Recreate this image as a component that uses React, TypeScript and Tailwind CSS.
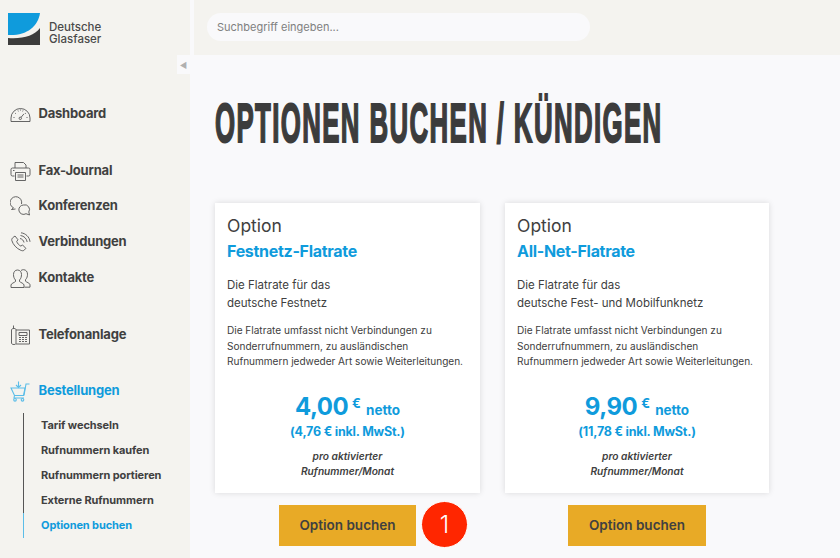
import React from "react";

const ic = "w-[21px] h-[21px] shrink-0 fill-none stroke-[#555555] stroke-[0.9]";

const Gauge = () => (
  <svg viewBox="0 0 21 21" className={ic}>
    <path d="M1 17.500v-3.500a9.500 9.500 0 0 1 19 0v3.500z" />
    <path d="M3.500 13.500h1M16.500 13.500h1M5 9l.8.7M16 9l-.8.7M8 6.500l.4.9M13 6.500l-.4.9M10.500 5.500v1" />
    <circle cx="10.300" cy="14.300" r="1.200" />
    <path d="M11 13.400l3-3.600" />
  </svg>
);
const Printer = () => (
  <svg viewBox="0 0 21 21" className={ic}>
    <path d="M5 7V1.500h8.500L16 4v3" />
    <path d="M4.500 15H2.500A1.500 1.500 0 0 1 1 13.500V8.500A1.500 1.500 0 0 1 2.500 7h16A1.500 1.500 0 0 1 20 8.500v5a1.500 1.500 0 0 1-1.500 1.500h-2" />
    <path d="M5.500 11.500h10v8h-10z" />
    <path d="M7.500 14h6M7.500 16h6M3 9.500h1.500" />
  </svg>
);
const Chat = () => (
  <svg viewBox="0 0 21 21" className={ic}>
    <path d="M11.500 8A5.800 5.800 0 1 0 3.500 11.800L1.500 13.500l4-.5" />
    <path d="M13.500 9a4.700 4.700 0 1 0 2.500 8.700l3.500 1.300-.7-3A4.700 4.700 0 0 0 13.500 9z" />
  </svg>
);
const Phone = () => (
  <svg viewBox="0 0 21 21" className={ic}>
    <path d="M3 5.500l2-1.500 3 3.800-1.300 1.600c.6 2 2.200 3.800 4.200 4.700l1.600-1.200 3.300 3.400-1.700 2c-.8.600-2 .6-3.300 0C6.500 16.500 3 12.500 1.800 8.500c-.3-1.200.3-2.300 1.200-3z" />
    <path d="M10 6.500c2 .3 3.700 2 4 4M10.500 3.500c3.500.4 6.200 3.200 6.700 6.500M11 .8c4.500.5 8.500 4 9 9" />
  </svg>
);
const People = () => (
  <svg viewBox="0 0 21 21" className={ic}>
    <path d="M1 19.500v-2.500c0-1.500 3.500-2.500 4.500-3.500v-1.500C4 10.500 3.500 8.500 3.500 6.500c0-2.500 1.500-4.500 4-4.500s4 2 4 4.500c0 2-.5 4-2 5.500v1.500c1 1 4.500 2 4.500 3.500v2.500z" />
    <path d="M11 2.500c.8-.6 1.500-.8 2.500-.8 2.500 0 4 2 4 4.500 0 2-.5 4-2 5.500v1.500c1 1 4.500 2 4.500 3.500v2.500h-5.500" />
  </svg>
);
const Desk = () => (
  <svg viewBox="0 0 21 21" className={ic}>
    <path d="M4 3.500c-1.500 0-2.500.5-2.500 1.500v13c0 1 1 1.500 2.500 1.500s2-.5 2-1.500V5c0-1-.5-1.500-2-1.500z" />
    <path d="M3.500 3.500V.5M6 5h13.500v14H6" />
    <path d="M9 7.500h8v3H9z" />
    <path d="M9 12.500h2M12 12.500h2M15 12.500h2M9 14.500h2M12 14.500h2M15 14.500h2M9 16.500h2M12 16.500h2M15 16.500h2" />
  </svg>
);
const Cart = () => (
  <svg viewBox="0 0 21 21" className="w-[21px] h-[21px] shrink-0 fill-none stroke-[#5bbde8] stroke-[1.1]">
    <path d="M1 7h14l-1.500 7.500H4.500z" />
    <path d="M14 14.500l2-11.500h3.500" />
    <path d="M4.500 14.500l-.5 2.500h10" />
    <circle cx="5" cy="18.800" r="1.300" />
    <circle cx="12.500" cy="18.800" r="1.300" />
    <path d="M8.500 .5v6M6 4l2.500 2.500L11 4" />
  </svg>
);

function NavItem({ icon, label, className = "", active = false }: { icon: React.ReactNode; label: string; className?: string; active?: boolean }) {
  return (
    <div className={`flex h-[24px] items-center gap-[7.500px] pl-[10px] ${className}`}>
      {icon}
      <span className={`text-[13px] font-bold tracking-[-0.2px] ${active ? "text-[#0f9bdc]" : "text-[#404040]"}`}>{label}</span>
    </div>
  );
}

function Card({ name, sub, price, gross, width, buttonWidth }: { name: string; sub: string; price: string; gross: string; width: string; buttonWidth: string }) {
  return (
    <div className="flex flex-col items-center">
      <div className={`h-[290px] ${width} bg-white px-[12px] pt-[12px] shadow-[0_0_6px_rgba(0,0,0,0.13)]`}>
        <div className="text-[17.5px] leading-[22px] text-[#404040]">Option</div>
        <div className="mt-[3px] text-[16px] font-bold leading-[22px] tracking-[-0.3px] text-[#0f9bdc]">{name}</div>
        <div className="mt-[14px] text-[11.5px] leading-[18px] text-[#404040]">
          Die Flatrate für das
          <br />
          {sub}
        </div>
        <div className="mt-[11px] whitespace-nowrap text-[10.05px] leading-[15.500px] text-[#404040]">
          Die Flatrate umfasst nicht Verbindungen zu
          <br />
          Sonderrufnummern, zu ausländischen
          <br />
          Rufnummern jedweder Art sowie Weiterleitungen.
        </div>
        <div className="mt-[23px] text-center font-bold text-[#0f9bdc]">
          <div className="leading-[28px]">
            <span className="text-[24px] tracking-[-0.5px]">{price}</span>
            <span className="relative top-[-7px] ml-[4px] text-[13px]">€</span>
            <span className="ml-[5px] text-[13.5px]">netto</span>
          </div>
          <div className="mt-[-1px] text-[12.5px] leading-[18px] tracking-[-0.2px]">{gross}</div>
        </div>
        <div className="mt-[8px] text-center text-[10.2px] font-semibold italic leading-[15.500px] text-[#404040]">
          pro aktivierter
          <br />
          Rufnummer/Monat
        </div>
      </div>
      <div className={`mt-[12px] flex h-[41px] ${buttonWidth} items-center justify-center bg-[#e8aa26] text-[13.500px] font-semibold text-[#404040]`}>
        Option buchen
      </div>
    </div>
  );
}

export default function App() {
  return (
    <div className="flex h-[558px] w-[840px] overflow-hidden bg-[#f9f9fb] font-['Inter',sans-serif]">
      <aside className="relative h-full w-[190px] shrink-0 bg-[#f4f3ef]">
        <div className="flex items-end gap-[9px] pl-[8px] pt-[13px]">
          <svg viewBox="0 0 32 32" className="h-[32px] w-[32px] shrink-0">
            <path d="M0 0h32C30 14 18 23 0 22z" fill="#0f9bdc" />
            <path d="M32 15v17H0v-7c15 1 26-2 32-10z" fill="#3c3c3c" />
          </svg>
          <div className="text-[11.500px] font-medium leading-[12px] text-[#4a4a4a]">
            Deutsche
            <br />
            Glasfaser
          </div>
        </div>
        <div className="absolute right-0 top-[55px] flex h-[19px] w-[13px] items-center justify-center bg-[#f9f9fb] text-[8px] text-[#b0b0b0]">◀</div>
        <nav className="mt-[57px]">
          <NavItem icon={<Gauge />} label="Dashboard" className="mb-[33px]" />
          <NavItem icon={<Printer />} label="Fax-Journal" className="mb-[11px]" />
          <NavItem icon={<Chat />} label="Konferenzen" className="mb-[12px]" />
          <NavItem icon={<Phone />} label="Verbindungen" className="mb-[12px]" />
          <NavItem icon={<People />} label="Kontakte" className="mb-[33px]" />
          <NavItem icon={<Desk />} label="Telefonanlage" className="mb-[32px]" />
          <NavItem icon={<Cart />} label="Bestellungen" active />
          <div className="relative ml-[23px] mt-[10px] border-l border-[#555555] pl-[17px] text-[11px] font-bold tracking-[-0.1px] text-[#404040]">
            <div className="absolute -left-px bottom-0 h-[25px] w-px bg-[#5bbde8]" />
            {["Tarif wechseln", "Rufnummern kaufen", "Rufnummern portieren", "Externe Rufnummern"].map((t) => (
              <div key={t} className="h-[25px] whitespace-nowrap leading-[25px]">{t}</div>
            ))}
            <div className="h-[25px] leading-[25px] text-[#0f9bdc]">Optionen buchen</div>
          </div>
        </nav>
      </aside>
      <main className="min-w-0 flex-1">
        <header className="flex h-[55px] items-start border-l-4 border-[#f9f9fb] bg-[#f4f3ef] pl-[13px] pt-[13px]">
          <div className="flex h-[28px] w-[383px] items-center rounded-full bg-[#f9f9fb] pl-[10px] text-[11px] text-[#808080]">Suchbegriff eingeben...</div>
        </header>
        <h1 className="ml-[25px] mt-[36px] h-[64px] origin-left scale-x-[0.461] whitespace-nowrap font-['Liberation_Sans',sans-serif] text-[56px] font-bold leading-[64px] tracking-[3px] text-[#3c3c3c] [-webkit-text-stroke:2px_#3c3c3c]">
          OPTIONEN BUCHEN / KÜNDIGEN
        </h1>
        <div className="ml-[25px] mt-[48px] flex gap-[25px]">
          <div className="relative">
            <Card width="w-[265px]" buttonWidth="w-[137px]" name="Festnetz-Flatrate" sub="deutsche Festnetz" price="4,00" gross="(4,76 € inkl. MwSt.)" />
            <div className="absolute left-[206px] top-[298px] flex h-[47px] w-[47px] items-center justify-center rounded-full border border-white bg-[#ff2600] text-[24px] font-light text-white">1</div>
          </div>
          <Card width="w-[264px]" buttonWidth="w-[138px]" name="All-Net-Flatrate" sub="deutsche Fest- und Mobilfunknetz" price="9,90" gross="(11,78 € inkl. MwSt.)" />
        </div>
      </main>
    </div>
  );
}
